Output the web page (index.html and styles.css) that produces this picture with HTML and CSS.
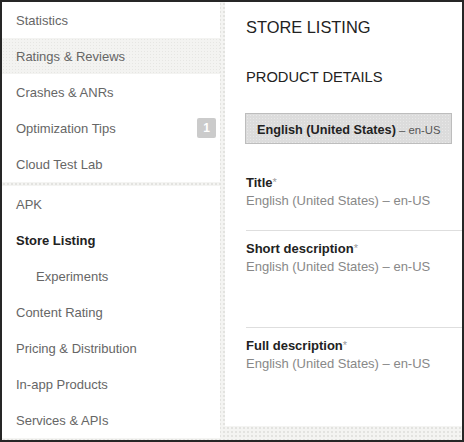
FILE: index.html
```html
<!DOCTYPE html>
<html>
<head>
<meta charset="utf-8">
<link rel="stylesheet" href="styles.css">
</head>
<body>
<div class="frame">
  <nav class="sidebar">
    <ul class="group">
      <li class="item">Statistics</li>
      <li class="item hover">Ratings &amp; Reviews</li>
      <li class="item">Crashes &amp; ANRs</li>
      <li class="item">Optimization Tips <span class="badge">1</span></li>
      <li class="item">Cloud Test Lab</li>
    </ul>
    <ul class="group">
      <li class="item">APK</li>
      <li class="item active">Store Listing</li>
      <li class="item sub">Experiments</li>
      <li class="item">Content Rating</li>
      <li class="item">Pricing &amp; Distribution</li>
      <li class="item">In-app Products</li>
      <li class="item">Services &amp; APIs</li>
    </ul>
  </nav>
  <main class="main">
    <h1 class="title">STORE LISTING</h1>
    <h2 class="subtitle">PRODUCT DETAILS</h2>
    <div class="lang-btn"><span class="lang-name">English (United States)</span><span class="lang-code"> – en-US</span></div>
    <section class="field first">
      <div class="label">Title<span class="req">*</span></div>
      <div class="value">English (United States) – en-US</div>
    </section>
    <section class="field tall">
      <div class="label">Short description<span class="req">*</span></div>
      <div class="value">English (United States) – en-US</div>
    </section>
    <section class="field">
      <div class="label">Full description<span class="req">*</span></div>
      <div class="value">English (United States) – en-US</div>
    </section>
  </main>
</div>
</body>
</html>
```

FILE: styles.css
```css
* { box-sizing: border-box; }
html, body { margin: 0; padding: 0; }
body {
  font-family: "Liberation Sans", Arial, Helvetica, sans-serif;
  width: 464px;
  height: 442px;
  overflow: hidden;
}
.frame {
  width: 464px;
  height: 442px;
  border: 2px solid #262626;
  display: flex;
  align-items: flex-start;
  background-color: #f4f4f2;
  background-image: radial-gradient(circle, #e2e2df 0.7px, transparent 0.9px);
  background-size: 4px 4px;
}
.sidebar {
  width: 218px;
  margin-right: 5px;
  display: flex;
  flex-direction: column;
  gap: 4px;
}
.group {
  list-style: none;
  margin: 0;
  padding: 0;
  background: #fff;
}
.item {
  height: 36px;
  display: flex;
  align-items: center;
  padding: 0 4px 0 14px;
  font-size: 13px;
  color: #666;
}
.item.hover {
  background-color: #f3f3f1;
  background-image: radial-gradient(circle, #e6e6e3 0.6px, transparent 0.8px);
  background-size: 3px 3px;
}
.item.active {
  color: #222;
  font-weight: bold;
}
.item.sub { padding-left: 34px; }
.badge {
  margin-left: auto;
  width: 19px;
  height: 20px;
  border-radius: 2px;
  background: #cbcbcb;
  color: #fff;
  font-weight: bold;
  font-size: 12px;
  display: flex;
  align-items: center;
  justify-content: center;
}
.main {
  flex: 1;
  height: 424px;
  background: #fff;
  padding: 15px 0 0 21px;
}
.title {
  margin: 0;
  font-size: 16.4px;
  line-height: 20px;
  font-weight: normal;
  color: #222;
}
.subtitle {
  margin: 30px 0 0;
  font-size: 14.7px;
  line-height: 20px;
  font-weight: normal;
  color: #222;
}
.lang-btn {
  display: inline-block;
  margin: 26px 0 0 -1px;
  height: 31px;
  line-height: 29px;
  padding: 0 11px;
  border: 1px solid #bdbdbd;
  background-color: #dcdcdc;
  background-image: radial-gradient(circle, #e8e8e8 0.6px, transparent 0.8px);
  background-size: 3px 3px;
  white-space: nowrap;
}
.lang-name {
  font-weight: bold;
  font-size: 12.7px;
  color: #222;
}
.lang-code {
  font-size: 11.3px;
  color: #555;
}
.field {
  border-bottom: 1px solid #dedede;
  padding: 9px 0 20px;
}
.field.first { padding-top: 30px; }
.field.tall { padding-bottom: 51px; }
.field:last-child { border-bottom: none; }
.label {
  font-size: 13px;
  line-height: 18px;
  font-weight: bold;
  color: #222;
}
.req {
  color: #999;
  font-weight: normal;
  font-size: 11px;
  vertical-align: top;
  position: relative;
  top: -1px;
}
.value {
  font-size: 13px;
  line-height: 18px;
  color: #888;
}
```
